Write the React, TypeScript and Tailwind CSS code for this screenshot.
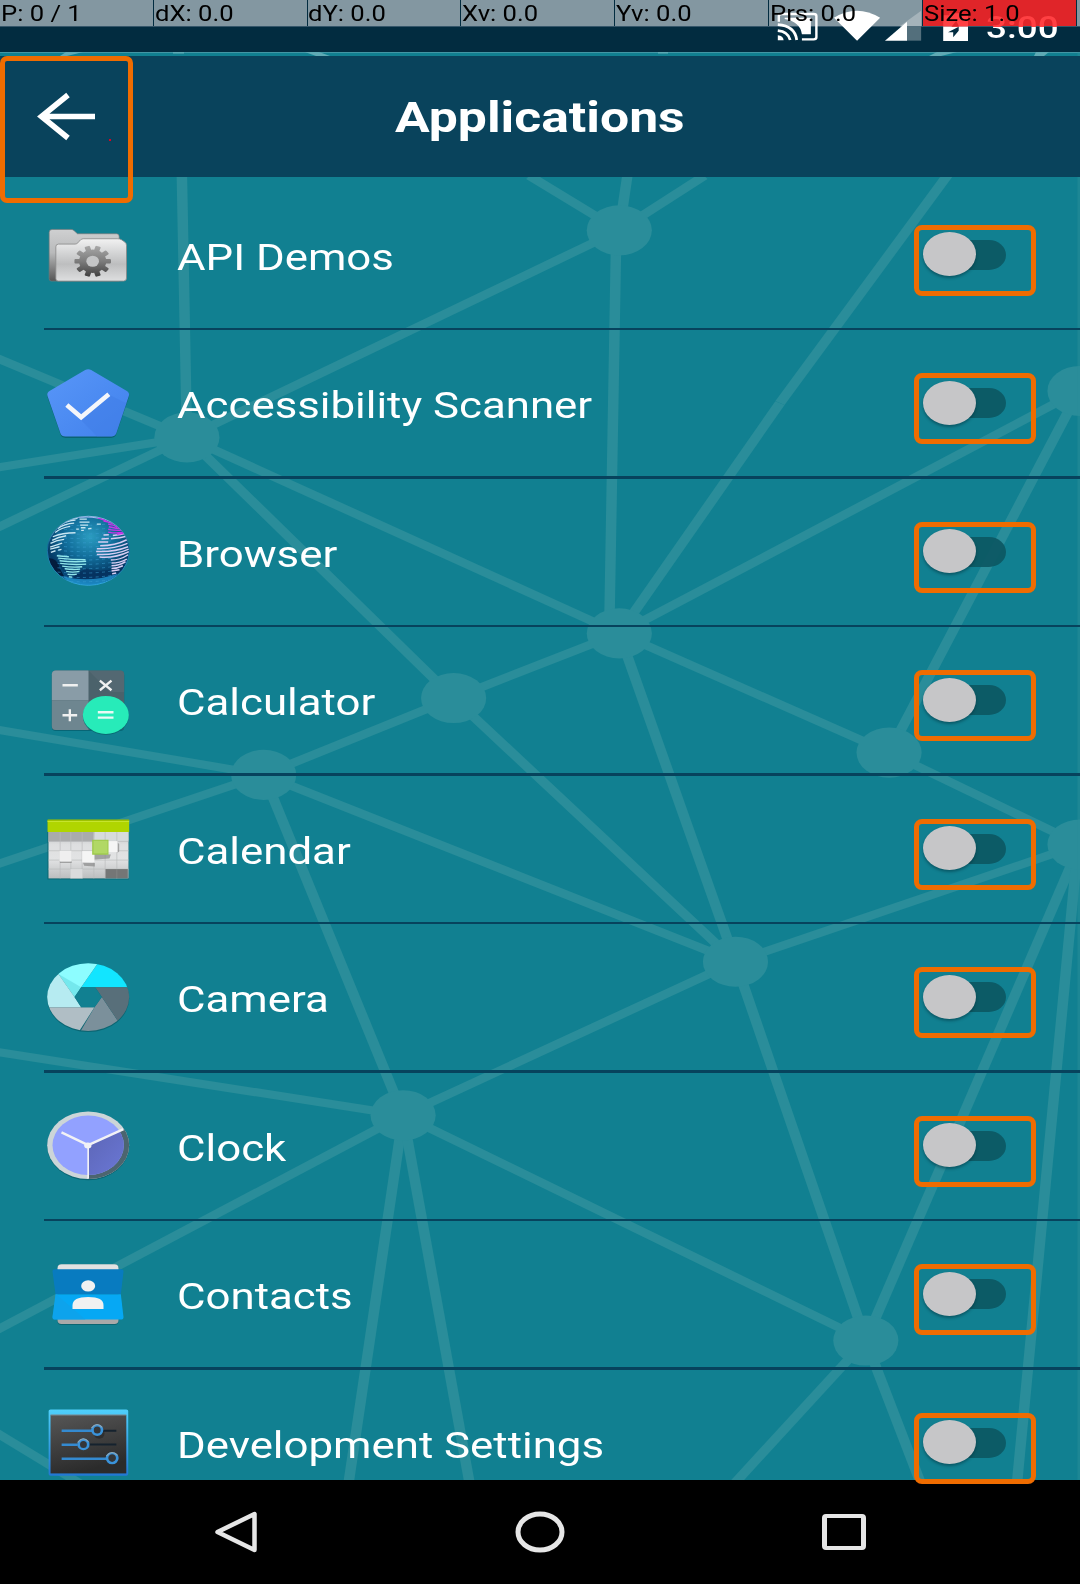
import React from "react";

const STRETCH = 1.3;

const links: number[][] = [
  [613, 228, 524, 174], [613, 228, 631, 106], [613, 228, 697, 174],
  [185, 433, 179, 120], [185, 433, 613, 228], [185, 433, -4, 354], [185, 433, -4, 463], [185, 433, -4, 523],
  [185, 433, 613, 627], [185, 433, 449, 691],
  [610, 228, 603, 627], [613, 627, 772, 399], [772, 399, 958, 146],
  [613, 627, 1068, 387], [1068, 387, 880, 745], [613, 627, 880, 745], [613, 627, 728, 952], [613, 627, 449, 691],
  [449, 691, 261, 767], [449, 691, 728, 952],
  [261, 767, -4, 722], [261, 767, -4, 856], [261, 767, 399, 1104], [261, 767, 728, 952],
  [880, 745, 1069, 836], [1069, 836, 728, 952], [728, 952, 399, 1104], [728, 952, 857, 1327],
  [399, 1104, -4, 1041], [399, 1104, -4, 1317], [399, 1104, 344, 1475], [399, 1104, 466, 1475], [399, 1104, 857, 1327],
  [857, 1327, 721, 1475], [857, 1327, 914, 1475],
  [1069, 836, 857, 1327], [1067, 836, 1006, 1475],
  [-4, 1418, 90, 1475],
];

const nodes: number[][] = [
  [613, 228], [185, 433], [1069, 387], [613, 627], [449, 691], [261, 767],
  [880, 745], [1069, 836], [728, 952], [399, 1104], [857, 1327],
];

function Network() {
  return (
    <svg className="pointer-events-none absolute inset-0 h-[1584px] w-[1080px]" viewBox="0 0 1069 1568" preserveAspectRatio="none">
      <g transform={`scale(${STRETCH} 1)`} stroke="#2a8d9a" strokeWidth="8">
        {links.map(([a, b, c, d], i) => (
          <line key={i} x1={a / STRETCH} y1={b} x2={c / STRETCH} y2={d} />
        ))}
        {nodes.map(([x, y], i) => (
          <circle key={i} cx={x / STRETCH} cy={y} r="24.8" fill="#2a8d9a" stroke="none" />
        ))}
      </g>
      <rect x="1066.5" y="52" width="3" height="1413" fill="#2a8d9a" opacity="0.5" />
    </svg>
  );
}

function AppIcon({ box, children }: { box: string; children: React.ReactNode }) {
  return (
    <svg className="h-[78px] w-[90px] shrink-0 overflow-visible" viewBox={box} preserveAspectRatio="none">
      {children}
    </svg>
  );
}

const FolderIcon = () => {
  const teeth = Array.from({ length: 5 }, (_, i) => i * 36);
  return (
    <AppIcon box="40.5 13.75 270 234">
      <defs>
        <linearGradient id="fBack" x1="0" y1="0" x2="0" y2="1">
          <stop offset="0" stopColor="#cfd0d1" /><stop offset=".45" stopColor="#b9babb" /><stop offset="1" stopColor="#555" />
        </linearGradient>
        <linearGradient id="fFront" x1="0" y1="0" x2="0" y2="1">
          <stop offset="0" stopColor="#f2f2f2" /><stop offset=".35" stopColor="#d2d3d4" /><stop offset=".6" stopColor="#bdbebf" /><stop offset="1" stopColor="#dedfe0" />
        </linearGradient>
        <linearGradient id="gear" gradientUnits="userSpaceOnUse" x1="0" y1="106" x2="0" y2="199">
          <stop offset="0" stopColor="#a8a8a8" /><stop offset=".5" stopColor="#7c7c7c" /><stop offset="1" stopColor="#404040" />
        </linearGradient>
        <clipPath id="gearShape">
          {teeth.map((a) => (
            <rect key={a} x="-7" y="-47" width="14" height="94" rx="3" transform={`translate(189.5 152.5) scale(1.17 1) rotate(${a + 18})`} />
          ))}
          <ellipse cx="189.5" cy="152.5" rx="41" ry="35" />
        </clipPath>
      </defs>
      <path d="M59 66q0-9 9-9h57q5 0 9 4l10 9h117q8 0 8 8v134H66q-7 0-7-7z" fill="url(#fBack)" stroke="#777" strokeWidth="2" />
      <path d="M79 109q0-8 8-8h50q5 0 9-5l5-5q4-6 10-6h104q6 0 11 3l10 7q5 4 5 10v98q0 9-9 9H86q-7 0-7-7z" fill="url(#fFront)" stroke="#8a8a8a" strokeWidth="2.5" />
      <rect x="130" y="100" width="120" height="104" fill="url(#gear)" clipPath="url(#gearShape)" />
      <ellipse cx="189.5" cy="152.5" rx="19" ry="16.5" fill="#c4c5c6" />
    </AppIcon>
  );
};

const ScannerIcon = () => (
  <AppIcon box="40.5 461.25 270 234">
    <defs>
      <linearGradient id="scan" x1="0" y1="0" x2="1" y2="1">
        <stop offset="0" stopColor="#5896f8" /><stop offset="1" stopColor="#4181ec" />
      </linearGradient>
    </defs>
    <path d="M167 482q9-5 18 0l107 63q10 6 6 16l-38 112q-4 10-15 10H108q-12 0-15-10L54 561q-3-10 6-16z" fill="#0a6473" />
    <path d="M167 479q9-4 18 0l107 63q9 6 6 15l-38 113q-4 9-15 9H108q-12 0-15-9L54 557q-3-9 6-15z" fill="url(#scan)" />
    <path d="M155 630l48 49h42q11 0 15-9l31-91-49-24z" fill="#3f7be4" opacity=".4" />
    <path d="M112 584l43 37 83-69" fill="none" stroke="#f4f6fa" strokeWidth="14" />
  </AppIcon>
);

const GlobeIcon = () => {
  const rows = Array.from({ length: 14 }, (_, i) => 104 + i * 13);
  return (
    <AppIcon box="40.5 66.75 270 234">
      <defs>
        <radialGradient id="globe" cx=".52" cy=".3" r=".65">
          <stop offset="0" stopColor="#2b9cc0" /><stop offset=".45" stopColor="#126f9c" /><stop offset=".85" stopColor="#053b66" /><stop offset="1" stopColor="#094b7d" />
        </radialGradient>
        <linearGradient id="rim" x1="0" y1="0" x2="0" y2="1">
          <stop offset="0" stopColor="#8bb8e2" /><stop offset=".4" stopColor="#146698" /><stop offset="1" stopColor="#37abe4" />
        </linearGradient>
        <clipPath id="globeClip"><ellipse cx="176.500" cy="183" rx="122" ry="103" /></clipPath>
      </defs>
      <ellipse cx="176.500" cy="183" rx="123" ry="103.500" fill="url(#globe)" stroke="url(#rim)" strokeWidth="3" />
      <g clipPath="url(#globeClip)" fill="none">
        <path d="M50 205q20 80 78 88-25-30-38-58-6-30-34-30z" fill="#031c3d" />
        <path d="M168 236q60 18 120-12l-18 36q-90 40-145 4z" fill="#052f5c" opacity=".7" />
        <path d="M95 258q80 24 170-6-30 38-88 38-52 0-82-32z" fill="#229bd8" opacity=".75" />
        {rows.map((y) => (
          <path key={y} d={`M84 ${y}q90 8 170-4`} stroke="#3c9fd2" strokeWidth="2.500" strokeDasharray="9 10" opacity=".65" />
        ))}
        <g stroke="#c8e6f2" strokeWidth="4">
          <path d="M124 87q-10 1-18 6M138 91q-28 2-44 14M134 100q-30 2-49 16M122 110q-26 4-45 18M140 118l8 0M138 129q-40 0-68 12M110 138q-24 4-42 14M104 149q-22 2-41 12M98 160l-36 12M90 171l-28 7M96 179l-10 2M78 183l-14 5" />
          <path d="M128 88l16-2M150 88l22 0M150 97l30 0M152 106l24 0M154 114l14 0M155 122l8 0M176 117l10-1M214 103l-12 0" />
          <path d="M148 83q25-4 60 2" stroke="#a4b8ee" />
        </g>
        <g stroke="#91e5ea" strokeWidth="4">
          <path d="M82 198l36 3M86 205q44 5 82 5M90 213q40 5 80 2M92 221q40 5 78 2M98 229q32 5 60 2M106 237q26 4 46 1M110 245q20 4 40 0M114 253q12 3 28 0M118 261l10 1" />
        </g>
        <g stroke="#d5cdf2" strokeWidth="4.5">
          <path d="M222 136l16-1M216 148l22-2M250 137q22-2 44-8M244 147q28-2 50-8M206 157l30 0M212 168q45 0 80-18M202 177q50 2 92-16M200 185q52 3 96-14M202 194q54 3 96-16M210 202q46 4 88-16M244 211q28 0 52-16M246 220q24 0 46-12M246 228q22 0 42-12M246 236q18 0 34-8M246 244l24-4M248 252l12-2" />
        </g>
        <g stroke="#c536e8" strokeWidth="4">
          <path d="M205 84q22 6 35 16M222 94q18 2 28 8M236 104q16 0 28 8M238 111q24 6 40 6M236 119q24 4 48 2M236 127q30 6 54-2M262 134l30-5" />
        </g>
      </g>
    </AppIcon>
  );
};

const CalculatorIcon = () => (
  <AppIcon box="40.5 482.25 270 234">
    <rect x="67" y="514" width="217" height="178" rx="12" fill="#086575" />
    <rect x="67" y="511" width="217" height="178" rx="12" fill="#4b626b" />
    <path d="M79 511h98v89H67v-77q0-12 12-12z" fill="#899ca7" />
    <path d="M67 600h110v89H79q-12 0-12-12z" fill="#6e8690" />
    <path d="M177 511l64 64h43v-52q0-12-12-12z" fill="#586d76" opacity=".6" />
    <g stroke="#f0f1f1" strokeWidth="7">
      <path d="M99 555h46M99 645h44M121 627v36" />
      <path d="M211 541l35 29M246 541l-35 29" />
    </g>
    <ellipse cx="229" cy="647" rx="69" ry="57" fill="#0a6b75" />
    <ellipse cx="229" cy="644" rx="69" ry="57" fill="#27ebb9" />
    <path d="M205 636h47M205 652h47" stroke="#eafaf5" strokeWidth="7" />
  </AppIcon>
);

const CalendarIcon = () => (
  <AppIcon box="40.5 27.75 270 234">
    <defs>
      <linearGradient id="cal" x1="0" y1="0" x2="0" y2="1">
        <stop offset="0" stopColor="#b9bbbc" /><stop offset=".3" stopColor="#dedfe0" /><stop offset=".6" stopColor="#e2e3e4" /><stop offset="1" stopColor="#bcbebf" />
      </linearGradient>
    </defs>
    <rect x="54" y="62" width="244" height="177" fill="#0b6672" />
    <rect x="57" y="92" width="240" height="144" fill="url(#cal)" />
    <path d="M57 97h135v28H57z" fill="#a9abac" />
    <path d="M195 97h102v26H195z" fill="#d7dbdc" />
    <path d="M92 97v139M124 97v139M158 97v139M193 97v139M227 97v139M262 97v139M57 125h240M57 153h240M57 181h240M57 208h240" stroke="#b9bbbc" strokeWidth="2" />
    <rect x="228" y="208" width="67" height="27" fill="#747676" />
    <rect x="123" y="208" width="36" height="28" fill="#dadbdc" />
    <path d="M262 208v27" stroke="#8a8c8c" strokeWidth="2" />
    <path d="M188 180l52-4 4-12-56-2zM160 188l36 2v10l-32-2zM90 185h38l-2 5H92zM264 128l5 5v22l-5 4z" fill="#888" opacity=".7" />
    <rect x="90" y="153" width="36" height="32" fill="#efefef" />
    <rect x="158" y="154" width="37" height="34" fill="#f5f5f5" />
    <rect x="234" y="124" width="30" height="33" fill="#f5f5f5" />
    <rect x="188" y="120" width="49" height="45" fill="#9cc94a" />
    <rect x="192" y="123" width="42" height="38" fill="#b1d865" />
    <rect x="54" y="60" width="245" height="37" rx="2" fill="#b0d500" />
    <path d="M54 65h245" stroke="#c9e631" strokeWidth="3" />
    <path d="M54 61h245" stroke="#8fb400" strokeWidth="3" />
  </AppIcon>
);

const CameraIcon = () => (
  <AppIcon box="40.5 473.25 270 234">
    <defs>
      <clipPath id="lens"><ellipse cx="176" cy="590.500" rx="123" ry="101.500" /></clipPath>
    </defs>
    <ellipse cx="176" cy="594" rx="123" ry="101.500" fill="#0b6572" />
    <g clipPath="url(#lens)">
      <path d="M155 561L205 489l110-20v92z" fill="#12e5ff" />
      <path d="M87 521V470h130l-12 19-50 72-20 29z" fill="#8dfdff" />
      <path d="M87 521l48 69 20-29z" fill="#57cfd6" opacity=".45" />
      <path d="M87 521l-60 20v80h128l-20-31z" fill="#b6ebf1" />
      <path d="M40 621h155l-46 72H80z" fill="#b0bec5" />
      <path d="M195 621l22-31 48 72-30 45h-90z" fill="#7b909b" />
      <path d="M197 561h120v101h-52l-48-72z" fill="#586f7a" />
      <path d="M155 561h42l20 29-22 31h-40l-20-31z" fill="#118091" />
    </g>
  </AppIcon>
);

const ClockIcon = () => (
  <AppIcon box="40.5 48.75 270 234">
    <defs>
      <clipPath id="clockOuter"><ellipse cx="176" cy="166.500" rx="123" ry="101.500" /></clipPath>
      <clipPath id="clockInner"><ellipse cx="176" cy="166.500" rx="107" ry="89" /></clipPath>
      <linearGradient id="shade" x1="0" y1="0" x2="1" y2="1">
        <stop offset="0" stopColor="#5c65b5" /><stop offset="1" stopColor="#6d7bdc" />
      </linearGradient>
    </defs>
    <ellipse cx="176" cy="170" rx="123" ry="101.500" fill="#0b6572" />
    <ellipse cx="176" cy="166.500" rx="123" ry="101.500" fill="#ccd5d8" />
    <path clipPath="url(#clockOuter)" d="M176 166l110-52 30 0v160H176z" fill="#4c656f" />
    <ellipse cx="176" cy="166.500" rx="107" ry="89" fill="#92a1ff" />
    <path clipPath="url(#clockInner)" d="M176 166l110-52 30 0v160H176z" fill="url(#shade)" />
    <path d="M176 166L96 128M176 166l106-48" stroke="#f2f2f5" strokeWidth="7" />
    <path d="M176 166v101" stroke="#f2f2f5" strokeWidth="5" />
    <ellipse cx="175" cy="167" rx="11" ry="9" fill="#f2f2f5" />
  </AppIcon>
);

const ContactsIcon = () => (
  <AppIcon box="40.5 494.25 270 234">
    <rect x="84" y="522" width="183" height="182" rx="12" fill="#0b6572" />
    <rect x="84" y="522" width="183" height="40" rx="12" fill="#e2e2e2" />
    <rect x="84" y="662" width="183" height="39" rx="12" fill="#a9a9a9" />
    <path d="M77 537h197q8 0 8 7l-8 68H78l-9-68q0-7 8-7z" fill="#087bc0" />
    <path d="M78 612h196l8 68q0 8-8 8H77q-8 0-8-8z" fill="#06a8f4" />
    <path d="M80 612l88 76H77q-8 0-8-8z" fill="#12a0e6" opacity=".6" />
    <ellipse cx="176" cy="587" rx="21" ry="17" fill="#f1f1f1" />
    <path d="M129 656v-11q0-25 47-25t46 25v11z" fill="#f1f1f1" />
  </AppIcon>
);

const SettingsIcon = () => (
  <AppIcon box="35.3 67.75 235.2 234">
    <defs>
      <linearGradient id="dev" x1="0" y1="0" x2="0" y2="1">
        <stop offset="0" stopColor="#4fd0fb" /><stop offset="1" stopColor="#2277d3" />
      </linearGradient>
      <linearGradient id="panel" x1="0" y1="0" x2=".3" y2="1">
        <stop offset="0" stopColor="#565656" /><stop offset="1" stopColor="#2b2b2b" />
      </linearGradient>
    </defs>
    <rect x="50" y="87" width="208" height="199" rx="5" fill="url(#dev)" />
    <rect x="55" y="104" width="198" height="175" fill="url(#panel)" />
    <path d="M55 104h198" stroke="#7a868c" strokeWidth="3" />
    <path d="M175 151h52M140 192h87" stroke="#15222e" strokeWidth="6" />
    <path d="M84 151h80M84 193h42M84 235h118" stroke="#348ad0" strokeWidth="7" />
    <ellipse cx="182" cy="160" rx="14" ry="15" fill="#1d1d1d" opacity=".5" />
    <g fill="#343638" stroke="#3a93da" strokeWidth="7">
      <ellipse cx="177" cy="149" rx="12.500" ry="14" />
      <ellipse cx="141" cy="192" rx="12.500" ry="14" />
      <ellipse cx="216" cy="233" rx="13.500" ry="15" />
    </g>
    <path d="M162 143q14-21 28-2M126 186q14-21 28-2M201 227q14-21 29-2" fill="none" stroke="#8fa6b4" strokeWidth="3" />
  </AppIcon>
);

const apps = [
  { name: "API Demos", Icon: FolderIcon },
  { name: "Accessibility Scanner", Icon: ScannerIcon },
  { name: "Browser", Icon: GlobeIcon },
  { name: "Calculator", Icon: CalculatorIcon },
  { name: "Calendar", Icon: CalendarIcon },
  { name: "Camera", Icon: CameraIcon },
  { name: "Clock", Icon: ClockIcon },
  { name: "Contacts", Icon: ContactsIcon },
  { name: "Development Settings", Icon: SettingsIcon },
];

function Toggle() {
  return (
    <button className="relative z-20 mt-[9px] h-[71px] w-[122px] shrink-0 rounded-[8px] border-[5px] border-[#ef6c00]">
      <span className="absolute left-[20px] top-[10px] h-[30px] w-[66.5px] rounded-r-[17px_15px] bg-[#0d5864]/95" />
      <span className="absolute left-[4px] top-[2.500px] h-[44px] w-[53px] rounded-[50%] bg-[#c6c6c8] shadow-[0_2px_3px_rgba(0,40,50,0.45)]" />
    </button>
  );
}

const pointer = ["P: 0 / 1", "dX: 0.0", "dY: 0.0", "Xv: 0.0", "Yv: 0.0", "Prs: 0.0", "Size: 1.0"];

function StatusBar() {
  return (
    <div className="relative h-[52px] shrink-0 bg-[#022c40]">
      <div className="flex h-[27px] border-b border-[#35566a]">
        {pointer.map((label, i) => (
          <div key={label} className={`h-full w-[153.8px] shrink-0 border-r border-[#022c40] ${i === 6 ? "bg-[#e02529]" : "bg-[#8397a1]"}`} />
        ))}
        <div className="h-full flex-1 bg-[#8397a1]" />
      </div>
      <svg className="absolute right-0 top-0 h-[52px] w-[306px]" viewBox="680 0 888 156" preserveAspectRatio="none">
        <g fill="none" stroke="#fff">
          <path d="M694 65V48q0-6 8-6h93q8 0 8 6v64q0 6-8 6h-34" strokeWidth="7" />
          <path d="M691 74q50 4 55 46M691 92q30 3 36 28" strokeWidth="8" />
        </g>
        <path d="M691 106q16 2 17 15h-17z" fill="#fff" />
        <path d="M711 53h76v50h-26q-5-38-50-46z" fill="#fff" />
        <path d="M854 53q66-42 134 0l-67 69z" fill="#fff" />
        <path d="M1107 32v47h-62z" fill="#a5b3ba" />
        <path d="M1065 79h42v43h-42z" fill="#536f7c" />
        <path d="M1066 65v57h-64z" fill="#fff" />
        <path d="M1171 46h18v-6h35v6h19v34h-72z" fill="#ff4043" />
        <path d="M1171 80h72v43h-72z" fill="#fff" />
        <path d="M1216 80l-31 17h15v15l16-20V80z" fill="#022c40" />
        <path d="M1209 62l-14 18h22z" fill="#e02529" />
      </svg>
      <div className="absolute left-[985.5px] top-[10px] h-[36px] origin-left scale-x-[1.19] bg-[linear-gradient(#ff4043_0_17px,#fff_17px)] bg-clip-text text-[31px] font-medium leading-[36px] text-transparent">3:00</div>
      <div className="absolute inset-x-0 top-0 flex h-[27px]">
        {pointer.map((label) => (
          <div key={label} className="w-[153.8px] shrink-0 whitespace-nowrap pl-[0.8px] text-[21.5px] leading-[27px] text-black">
            <span className="inline-block origin-left scale-x-[1.19]">{label}</span>
          </div>
        ))}
      </div>
    </div>
  );
}

export default function App() {
  return (
    <div className="relative flex h-[1584px] w-[1080px] flex-col overflow-hidden bg-[#118091] font-['Roboto',sans-serif] text-white">
      <Network />
      <StatusBar />
      <svg className="h-[4px] w-full shrink-0" viewBox="0 0 1080 4" preserveAspectRatio="none">
        <path d="M0 .5h1080" stroke="#4396a5" />
        <path d="M66 0h17l-16 4H60zM173 0h11v1.500h-11zM305 0h14l11 4h-14zM658 0h10v1.500h-10zM937 0h20l-16 4h-12zM1036 0h13l-5 4h-10z" fill="#5ea9b4" />
      </svg>
      <header className="relative flex h-[121px] shrink-0 items-center justify-center bg-[#09435c]">
        <button className="absolute left-0 top-0 h-[147px] w-[133px] rounded-[7px] border-[5px] border-[#ef6c00]">
          <svg className="absolute left-[32px] top-[31px] h-[49px] w-[60px]" viewBox="0 0 60 49" fill="none" stroke="#fff" strokeWidth="5.6">
            <path d="M31 3L4.500 24.500 31 46M5 24.500h53" />
          </svg>
          <span className="absolute left-[104px] top-[78px] size-[2px] bg-[#e00020]" />
        </button>
        <h1 className="mt-[3.5px] scale-x-[1.23] text-[42px] font-bold leading-[48px]">Applications</h1>
      </header>
      <main className="flex h-[1303px] shrink-0 flex-col pt-[4.5px]">
        {apps.map(({ name, Icon }, i) => (
          <div key={name} className="relative ml-[44px] flex h-[148.5px] shrink-0 items-center pr-[44px]">
            <div className="-ml-px flex h-[145.500px] items-center self-start"><Icon /></div>
            <div className="flex-1 self-start whitespace-nowrap pl-[43.5px] text-[37.5px] leading-[150px]">
              <span className="inline-block origin-left scale-x-[1.168]">{name}</span>
            </div>
            <Toggle />
            {i < 8 && <div className="absolute inset-x-0 bottom-0 h-[2.500px] bg-[#07435d]" />}
          </div>
        ))}
      </main>
      <nav className="relative z-10 flex h-[104px] shrink-0 items-center justify-center bg-black">
        <button className="flex w-[304px] justify-center">
          <svg className="h-[44px] w-[50px]" viewBox="0 0 50 44" fill="none" stroke="#e6e6e6" strokeWidth="4.500" strokeLinejoin="round">
            <path d="M43.500 4v36L6.500 22z" />
          </svg>
        </button>
        <button className="flex w-[304px] justify-center">
          <svg className="h-[42px] w-[50px]" viewBox="0 0 50 42" fill="none" stroke="#e6e6e6" strokeWidth="5">
            <ellipse cx="25" cy="21" rx="22" ry="18" />
          </svg>
        </button>
        <button className="flex w-[304px] justify-center">
          <span className="h-[36px] w-[44px] rounded-[4px] border-x-[5px] border-y-[4px] border-[#e6e6e6]" />
        </button>
      </nav>
    </div>
  );
}
